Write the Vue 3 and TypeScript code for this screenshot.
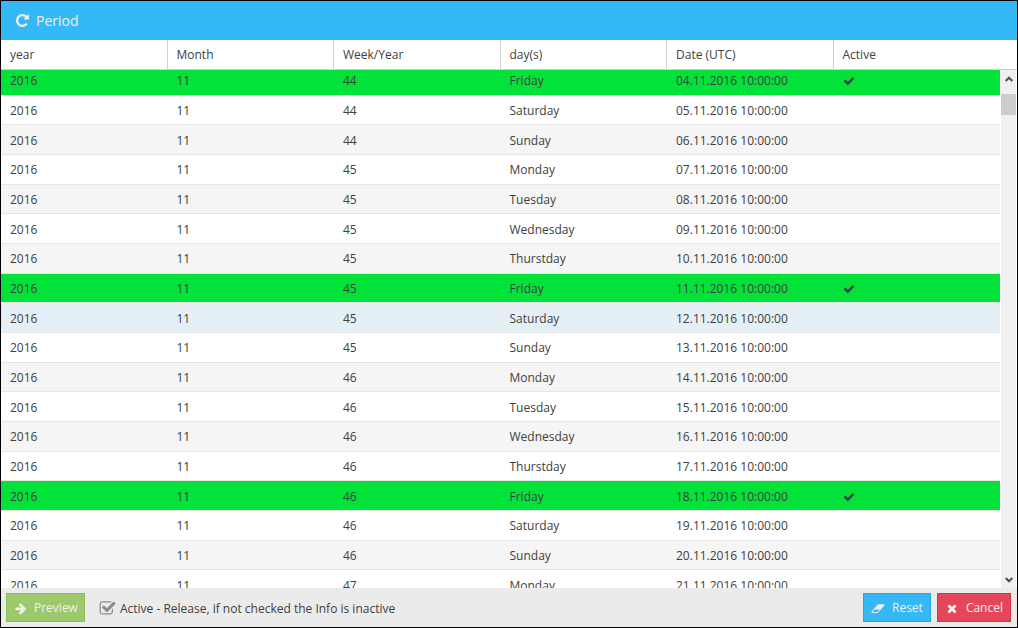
<script setup lang="ts">
import { onMounted, ref } from 'vue'

interface Period {
  year: number
  month: number
  week: number
  day: string
  date: string
  active: boolean
}

const columns = ['year', 'Month', 'Week/Year', 'day(s)', 'Date (UTC)', 'Active']
const dayNames = ['Friday', 'Saturday', 'Sunday', 'Monday', 'Tuesday', 'Wednesday', 'Thurstday']

const periods: Period[] = Array.from({ length: 18 }, (_, i) => ({
  year: 2016,
  month: 11,
  week: 44 + Math.floor((i + 4) / 7),
  day: dayNames[i % 7],
  date: `${String(i + 4).padStart(2, '0')}.11.2016 10:00:00`,
  active: i % 7 === 0,
}))

const hovered = ref(8)
const released = ref(true)
const scroller = ref<HTMLElement | null>(null)

function scrollRows(amount: number) {
  scroller.value?.scrollBy({ top: amount })
}

onMounted(() => {
  if (scroller.value) scroller.value.scrollTop = 4
})
</script>

<template>
  <main class="dialog">
    <header class="titlebar">
      <svg class="icon title-icon" viewBox="0 0 1792 1792" aria-hidden="true">
        <path d="M1664 256v448q0 26-19 45t-45 19h-448q-42 0-59-40-17-39 14-69l138-138q-148-137-349-137-104 0-198.500 40.500t-163.500 109.500-109.500 163.500-40.500 198.500 40.500 198.500 109.500 163.500 163.500 109.500 198.500 40.500q119 0 225-52t179-147q7-10 23-12 15 0 25 9l137 138q9 8 9.500 20.500t-7.500 22.500q-109 132-264 204.500t-327 72.500q-156 0-298-61t-245-164-164-245-61-298 61-298 164-245 245-164 298-61q147 0 284.500 55.500t244.500 156.500l130-129q29-31 70-14 39 17 39 59z" />
      </svg>
      <h1>Period</h1>
    </header>

    <section class="grid">
      <div ref="scroller" class="scroller">
        <table>
          <thead>
            <tr>
              <th v-for="name in columns" :key="name" scope="col">{{ name }}</th>
            </tr>
          </thead>
          <tbody>
            <tr
              v-for="(p, i) in periods"
              :key="p.date"
              :class="{ active: p.active, hovered: i === hovered }"
              @mouseenter="hovered = i"
            >
              <td>{{ p.year }}</td>
              <td>{{ p.month }}</td>
              <td>{{ p.week }}</td>
              <td>{{ p.day }}</td>
              <td>{{ p.date }}</td>
              <td>
                <svg v-if="p.active" class="icon check" viewBox="0 0 1792 1792" role="img" aria-label="Active">
                  <path d="M1671 566q0 40-28 68l-724 724-136 136q-28 28-68 28t-68-28l-136-136-362-362q-28-28-28-68t28-68l136-136q28-28 68-28t68 28l294 295 656-657q28-28 68-28t68 28l136 136q28 28 28 68z" />
                </svg>
              </td>
            </tr>
          </tbody>
        </table>
      </div>
      <div class="rail">
        <div class="rail-head"></div>
        <div class="track">
          <button type="button" class="step" aria-label="Scroll up" @click="scrollRows(-30)">
            <svg viewBox="0 0 8 6" aria-hidden="true"><path d="M0.700 5L4 1.700L7.300 5" /></svg>
          </button>
          <div class="thumb"></div>
          <button type="button" class="step down" aria-label="Scroll down" @click="scrollRows(30)">
            <svg viewBox="0 0 8 6" aria-hidden="true"><path d="M0.700 1L4 4.300L7.300 1" /></svg>
          </button>
        </div>
      </div>
    </section>

    <footer class="toolbar">
      <button type="button" class="btn preview">
        <svg class="icon" viewBox="0 0 1792 1792" aria-hidden="true">
          <path d="M1728 960q0 54-37 91l-651 651q-39 37-91 37-51 0-90-37l-75-75q-38-38-38-91t38-91l293-293h-704q-52 0-84.500-37.500t-32.500-90.500v-128q0-53 32.500-90.500t84.500-37.500h704l-293-294q-38-36-38-90t38-90l75-75q38-38 90-38 53 0 91 38l651 651q37 35 37 90z" />
        </svg>
        Preview
      </button>
      <label class="release">
        <span class="tick">
          <input v-model="released" type="checkbox" />
          <svg class="icon" viewBox="0 0 1792 1792" aria-hidden="true">
            <path d="M1472 930v318q0 119-84.500 203.500t-203.500 84.500h-832q-119 0-203.500-84.500t-84.500-203.500v-832q0-119 84.500-203.500t203.500-84.500h832q63 0 117 25 15 7 18 23 3 17-9 29l-49 49q-10 10-23 10-3 0-9-2-23-6-45-6h-832q-66 0-113 47t-47 113v832q0 66 47 113t113 47h832q66 0 113-47t47-113v-254q0-13 9-22l64-64q10-10 23-10 6 0 12 3 20 8 20 29z" />
            <path v-if="released" d="M1703 441l-814 814q-24 24-57 24t-57-24l-430-430q-24-24-24-57t24-57l110-110q24-24 57-24t57 24l263 263 647-647q24-24 57-24t57 24l110 110q24 24 24 57t-24 57z" />
          </svg>
        </span>
        Active - Release, if not checked the Info is inactive
      </label>
      <button type="button" class="btn reset">
        <svg class="icon" viewBox="0 0 2048 1792" aria-hidden="true">
          <path d="M960 1408l336-384h-768l-336 384h768zm1013-1077q15 34 9.500 71.500t-30.500 65.500l-896 1024q-38 44-96 44h-768q-38 0-69.500-20.500t-47.500-54.500q-15-34-9.500-71.500t30.500-65.500l896-1024q38-44 96-44h768q38 0 69.500 20.500t47.500 54.500z" />
        </svg>
        Reset
      </button>
      <button type="button" class="btn cancel">
        <svg class="icon" viewBox="0 0 1792 1792" aria-hidden="true">
          <path d="M1490 1322q0 40-28 68l-136 136q-28 28-68 28t-68-28l-294-294-294 294q-28 28-68 28t-68-28l-136-136q-28-28-28-68t28-68l294-294-294-294q-28-28-28-68t28-68l136-136q28-28 68-28t68 28l294 294 294-294q28-28 68-28t68 28l136 136q28 28 28 68t-28 68l-294 294 294 294q28 28 28 68z" />
        </svg>
        Cancel
      </button>
    </footer>
  </main>
</template>

<style>
body {
  margin: 0;
}
</style>

<style scoped>
.dialog {
  box-sizing: border-box;
  height: 100vh;
  display: flex;
  flex-direction: column;
  border: 1px solid #000;
  background: #fff;
  color: #404040;
  font: 12px/16px "Open Sans", sans-serif;
}

.icon {
  display: block;
  flex: none;
  height: 12px;
  fill: currentColor;
}

.titlebar {
  flex: none;
  height: 39px;
  display: flex;
  align-items: center;
  gap: 6px;
  padding: 0 14px;
  background: #35b9f6;
  color: #f0f0f0;
}

.title-icon {
  height: 15px;
}

h1 {
  margin: 0;
  font-size: 14px;
  font-weight: 400;
  line-height: 20px;
}

.grid {
  flex: 1;
  min-height: 0;
  display: flex;
}

.scroller {
  flex: 1;
  overflow-y: auto;
  scrollbar-width: none;
}

table {
  width: 100%;
  height: 564px;
  table-layout: fixed;
  border-collapse: separate;
  border-spacing: 0;
}

th {
  position: sticky;
  top: 0;
  box-sizing: border-box;
  height: 30px;
  padding: 0 9px;
  border-right: 1px solid #cfcfcf;
  border-bottom: 1px solid #cfcfcf;
  background: #fff;
  font-weight: 400;
  text-align: left;
}

th:last-child {
  border-right-color: #fff;
}

td {
  padding: 2px 9px 0;
  border-bottom: 1px solid #e6e6e6;
}

tbody tr:nth-child(odd) {
  background: #f5f5f5;
}

tbody tr.hovered {
  background: #e4f0f6;
}

tbody tr.active {
  background: #02e239;
}

.rail {
  flex: none;
  width: 17px;
  display: flex;
  flex-direction: column;
}

.rail-head {
  height: 29px;
  border-bottom: 1px solid #cfcfcf;
}

.track {
  flex: 1;
  display: flex;
  flex-direction: column;
  margin: 0 1px;
  background: #f0f0f0;
}

.step {
  height: 17px;
  padding: 0;
  border: 0;
  background: none;
  display: flex;
  align-items: center;
  justify-content: center;
}

.step svg {
  width: 8px;
  height: 6px;
  fill: none;
  stroke: #505050;
  stroke-width: 2;
}

.down {
  margin-top: auto;
}

.thumb {
  height: 21px;
  margin-top: 7px;
  background: #cdcdcd;
}

.toolbar {
  flex: none;
  height: 39px;
  display: flex;
  align-items: center;
  gap: 6px;
  padding: 0 6px 0 5px;
  background: #ebebeb;
}

.btn {
  height: 29px;
  display: flex;
  align-items: center;
  gap: 7px;
  padding: 1px 7px 0;
  border: 1px solid;
  color: #f0f0f0;
  font: inherit;
}

.btn .icon {
  width: 14px;
  height: 13px;
}

.preview {
  padding: 1px 6px 0;
  border-color: #8cc152;
  background: #9cc96b;
}

.reset {
  border-color: #1fa9ea;
  background: #35b9f6;
}

.cancel {
  border-color: #da3348;
  background: #e5475a;
}

.release {
  flex: 1;
  display: flex;
  align-items: center;
  gap: 4px;
  padding: 2px 0 0 8px;
}

.tick {
  display: grid;
  color: #8c8c8c;
}

.tick input,
.tick .icon {
  grid-area: 1 / 1;
  width: 17px;
  height: 17px;
  margin: 0;
}

.tick input {
  appearance: none;
}
</style>
